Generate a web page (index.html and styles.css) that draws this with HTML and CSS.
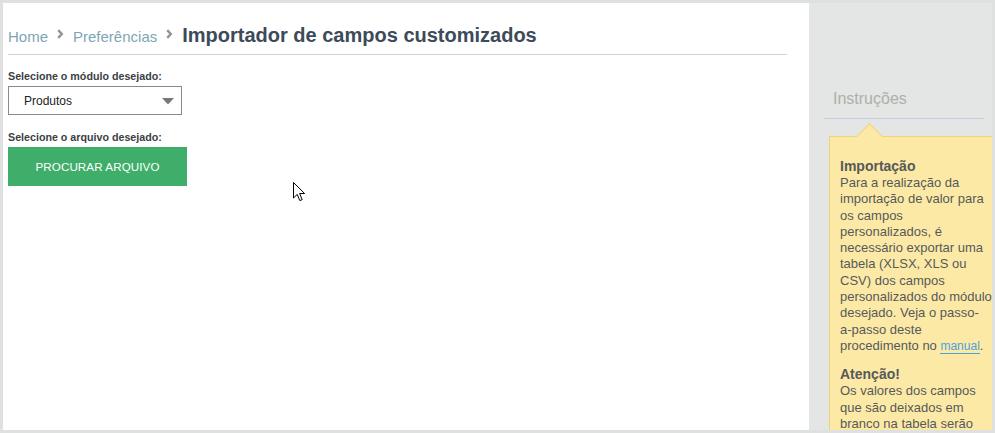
FILE: index.html
```html
<!DOCTYPE html>
<html lang="pt">
<head>
<meta charset="utf-8">
<link rel="stylesheet" href="styles.css">
</head>
<body>
<div class="frame">
  <main class="main">
    <nav class="crumbs">
      <a class="crumb">Home</a>
      <svg class="chev" width="7" height="10" viewBox="0 0 7 10"><path d="M1.2 1.2 L4.8 5 L1.2 8.8" fill="none" stroke="#8c9699" stroke-width="2.4"/></svg>
      <a class="crumb">Preferências</a>
      <svg class="chev" width="7" height="10" viewBox="0 0 7 10"><path d="M1.2 1.2 L4.8 5 L1.2 8.8" fill="none" stroke="#8c9699" stroke-width="2.4"/></svg>
      <h1 class="title">Importador de campos customizados</h1>
    </nav>
    <div class="form">
      <label class="label">Selecione o módulo desejado:</label>
      <div class="select">
        <span>Produtos</span>
        <svg width="12" height="7" viewBox="0 0 12 7"><path d="M0 0 H12 L6 6.5 Z" fill="#777"/></svg>
      </div>
      <label class="label label2">Selecione o arquivo desejado:</label>
      <button class="btn">PROCURAR ARQUIVO</button>
    </div>
    <svg class="cursor" width="13" height="20" viewBox="0 0 13 20"><path d="M0.5 0.5 V16 L4.2 12.4 L6.8 18.6 L9.2 17.6 L6.6 11.5 H11.6 Z" fill="#fff" stroke="#000" stroke-width="1" stroke-linejoin="round"/></svg>
  </main>
  <aside class="side">
    <h2 class="side-title">Instruções</h2>
    <div class="note">
      <h3>Importação</h3>
      <p>Para a realização da<br>importação de valor para<br>os campos<br>personalizados, é<br>necessário exportar uma<br>tabela (XLSX, XLS ou<br>CSV) dos campos<br>personalizados do módulo<br>desejado. Veja o passo-<br>a-passo deste<br>procedimento no <a class="link">manual</a>.</p>
      <h3>Atenção!</h3>
      <p>Os valores dos campos<br>que são deixados em<br>branco na tabela serão<br>ignorados na importação.</p>
    </div>
  </aside>
</div>
</body>
</html>
```

FILE: styles.css
```css
html, body {
  margin: 0;
  padding: 0;
  height: 100%;
  overflow: hidden;
}
body {
  background: #dfe0e0;
  font-family: "Liberation Sans", Arial, sans-serif;
}
.frame {
  display: flex;
  height: 427px;
  margin: 3px 3px 0 3px;
  overflow: hidden;
}
.main {
  position: relative;
  width: 806px;
  flex: none;
  background: #fff;
  padding: 0 22px 0 5px;
  box-sizing: border-box;
}
.crumbs {
  display: flex;
  align-items: baseline;
  height: 52px;
  border-bottom: 1px solid #c9d4dc;
  box-sizing: border-box;
}
.crumb {
  font-size: 15px;
  color: #7fa6b5;
  line-height: 1;
  margin-top: 26px;
}
.chev {
  margin: 0 9px 0 9px;
  align-self: flex-end;
  margin-bottom: 15px;
}
.title {
  margin: 0;
  font-size: 20px;
  font-weight: bold;
  color: #3d4a59;
  line-height: 1;
}
.form {
  padding-top: 15px;
}
.label {
  display: block;
  font-size: 10.7px;
  font-weight: bold;
  color: #3a3f44;
  line-height: 13px;
}
.select {
  margin-top: 3px;
  width: 174px;
  height: 29px;
  box-sizing: border-box;
  border: 1px solid #8a8a8a;
  display: flex;
  align-items: center;
  justify-content: space-between;
  padding: 0 7px 0 15px;
  font-size: 12px;
  color: #222;
}
.select svg {
  margin-top: 1px;
}
.label2 {
  margin-top: 16px;
}
.btn {
  display: block;
  margin-top: 3px;
  width: 179px;
  height: 39px;
  border: 0;
  background: #3fae6a;
  color: #fff;
  font-family: "Liberation Sans", Arial, sans-serif;
  font-size: 11.6px;
  letter-spacing: 0.1px;
  padding: 0;
}
.cursor {
  position: absolute;
  left: 290px;
  top: 179px;
}
.side {
  width: 183px;
  flex: none;
  background: #e4e5e5;
  padding: 87px 0 0 15px;
  box-sizing: border-box;
  overflow: hidden;
}
.side-title {
  margin: 0;
  font-weight: normal;
  font-size: 16px;
  color: #aab2aa;
  padding: 0 0 10px 9px;
  line-height: 18px;
  border-bottom: 1px solid #c6cfdf;
  margin-right: 8px;
}
.note {
  position: relative;
  margin-top: 17px;
  margin-left: 5px;
  width: 180px;
  background: #fde9a6;
  border: 1px solid #efd47e;
  padding: 21px 0 8px 10px;
  box-sizing: border-box;
  color: #555a5a;
  font-size: 13px;
  line-height: 16.3px;
  white-space: nowrap;
}
.note::before {
  content: "";
  position: absolute;
  left: 30px;
  top: -10px;
  width: 18px;
  height: 18px;
  background: #fde9a6;
  border-left: 1px solid #efd47e;
  border-top: 1px solid #efd47e;
  transform: rotate(45deg);
}
.note h3 {
  margin: 0;
  font-size: 14px;
  font-weight: bold;
  color: #555a5a;
  line-height: 17px;
}
.note p {
  margin: 0 0 12px 0;
}
.link {
  color: #4aa3dc;
  font-size: 12px;
  border-bottom: 1px solid #4aa3dc;
}
```
